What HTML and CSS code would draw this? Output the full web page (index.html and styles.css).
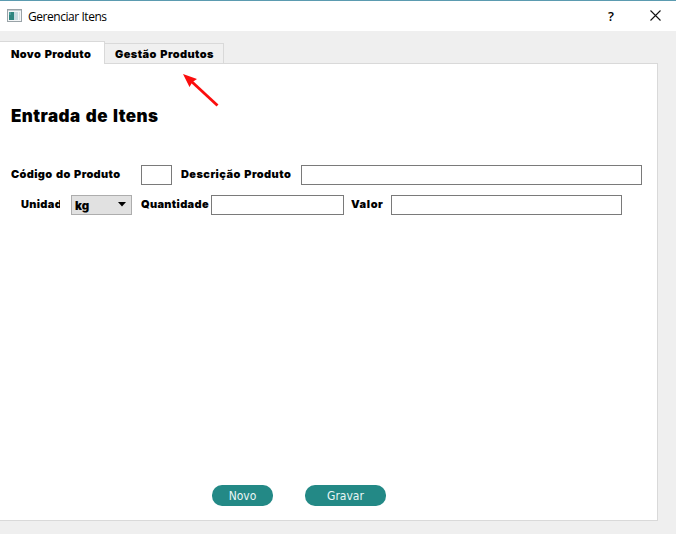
FILE: index.html
```html
<!DOCTYPE html>
<html lang="pt-BR">
<head>
<meta charset="utf-8">
<title>Gerenciar Itens</title>
<link rel="stylesheet" href="styles.css">
</head>
<body>
<div class="window">
  <header class="titlebar">
    <svg class="app-icon" width="16" height="14" viewBox="0 0 16 14" shape-rendering="crispEdges">
      <rect x="0.5" y="0.5" width="14" height="12" fill="#f4f6f7" stroke="#9aa3a8"/>
      <rect x="1" y="1" width="13" height="1" fill="#c6ced3"/>
      <rect x="2" y="3" width="5" height="8" fill="#2f8580"/>
      <rect x="2" y="3" width="2" height="3" fill="#4b9c9b"/>
      <rect x="7" y="3" width="4" height="8" fill="#c9dbe2"/>
      <rect x="12" y="3" width="1" height="8" fill="#dce3e6"/>
    </svg>
    <span class="title">Gerenciar Itens</span>
    <span class="help">?</span>
    <svg class="close" width="11" height="11" viewBox="0 0 11 11"><path d="M.5.5l10 10M10.5.5l-10 10" stroke="#111" stroke-width="1.1" fill="none"/></svg>
  </header>
  <nav class="tabs">
    <div class="tab active">Novo Produto</div>
    <div class="tab">Gestão Produtos</div>
  </nav>
  <main class="panel">
    <svg class="arrow" width="36" height="34" viewBox="0 0 36 34"><path d="M34.5 31.5L8 7" stroke="#fb0d0d" stroke-width="2.800" fill="none"/><path d="M0 0l14 5-4.500 3-3 5z" fill="#fb0d0d"/></svg>
    <h1>Entrada de Itens</h1>
    <div class="row">
      <label class="codigo">Código do Produto</label><input class="in-codigo">
      <label class="descricao">Descrição Produto</label><input class="in-descricao">
    </div>
    <div class="row second">
      <label class="unidade">Unidade</label>
      <div class="select"><span>kg</span><svg width="8" height="5" viewBox="0 0 8 5"><path d="M0 0h8L4 4.500z" fill="#000"/></svg></div>
      <label class="quantidade">Quantidade</label><input class="in-quantidade">
      <label class="valor">Valor</label><input class="in-valor">
    </div>
    <div class="actions"><button class="novo">Novo</button><button class="gravar">Gravar</button></div>
  </main>
</div>
</body>
</html>
```
FILE: styles.css
```css
* { box-sizing: border-box; }
body { margin: 0; background: #efefef; font-family: "Inter", sans-serif; color: #000; overflow: hidden; }
.window { width: 676px; height: 534px; display: flex; flex-direction: column; }
.titlebar { height: 31px; flex: none; background: #fff; border-top: 1px solid #5b9bb0; display: flex; align-items: center; padding: 0 15px 1px 7px; }
.title { margin-left: 5px; font: 12px "Open Sans", sans-serif; letter-spacing: -0.45px; padding-top: 1px; }
.help { margin-left: auto; margin-right: 36px; font: 600 13px "Open Sans", sans-serif; }
.tabs { height: 32px; display: flex; align-items: flex-end; flex: none; }
.tab { width: 119px; height: 20px; padding-left: 10px; border: 1px solid #d9d9d9; border-width: 1px 1px 0 0; background: #f0f0f0; font-size: 11px; font-weight: 900; line-height: 21px; white-space: nowrap; letter-spacing: 0.4px; word-spacing: 1px; }
.tab.active { width: 105px; height: 23px; margin-bottom: -1px; padding-left: 11px; background: #fff; line-height: 24px; letter-spacing: 0.35px; position: relative; z-index: 1; }
.panel { width: 658px; height: 458px; background: #fff; border: 1px solid #d9d9d9; border-left: 0; position: relative; display: flex; flex-direction: column; }
.arrow { position: absolute; left: 183px; top: 10px; }
h1 { margin: 40px 0 0 11px; height: 24px; font-size: 17px; line-height: 24px; font-weight: 900; white-space: nowrap; letter-spacing: 0.45px; word-spacing: 1.3px; }
.row { display: flex; height: 20px; margin-top: 37px; }
.row.second { margin-top: 10px; padding-left: 21px; }
label { font-size: 11px; line-height: 18px; font-weight: 900; white-space: nowrap; overflow: hidden; flex: none; letter-spacing: 0.33px; word-spacing: 1px; }
input { height: 20px; border: 1px solid #7a7a7a; background: #fff; margin: 0; padding: 0 3px; border-radius: 0; flex: none; }
.codigo { width: 130px; margin-left: 11px; }
.in-codigo { width: 31px; }
.descricao { width: 120px; margin-left: 9px; letter-spacing: 0.42px; }
.in-descricao { width: 341px; }
.unidade { width: 39px; margin-right: 11px; }
.select { width: 61px; height: 20px; border: 1px solid #adadad; background: #e1e1e1; display: flex; align-items: center; justify-content: space-between; padding: 2px 5px 0 3px; font-size: 11.5px; font-weight: 900; }
.select svg { margin-top: -3px; }
.quantidade { width: 70px; margin-left: 9px; }
.in-quantidade { width: 133px; }
.valor { width: 40px; margin-left: 7px; letter-spacing: 0.6px; }
.in-valor { width: 231px; }
.actions { display: flex; gap: 32px; margin: auto 0 14px 212px; }
button { height: 21px; border: 0; border-radius: 10px; background: #238986; color: #e9f6f5; font: 12px/21px "DejaVu Sans Condensed", "DejaVu Sans", sans-serif; font-stretch: condensed; padding: 1px 0 0; }
.novo { width: 61px; }
.gravar { width: 81px; }
```
